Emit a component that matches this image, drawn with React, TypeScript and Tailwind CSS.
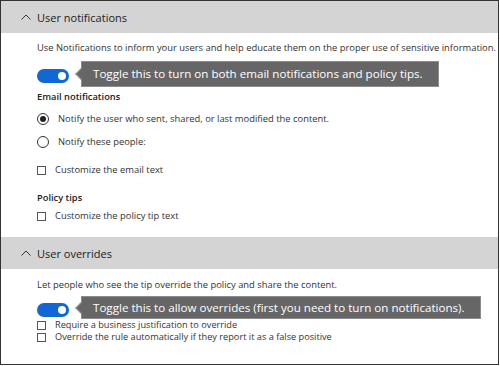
import React from "react";

const font = { fontFamily: '"Open Sans", "Noto Sans", Arial, sans-serif' };

function Chevron() {
  return (
    <svg width="10" height="6" viewBox="0 0 10 6" className="shrink-0">
      <polyline points="0.5,5.5 5,1 9.5,5.5" fill="none" stroke="#333" strokeWidth="1" />
    </svg>
  );
}

function Header({ title }: { title: string }) {
  return (
    <div className="h-[32px] bg-[#d4d4d4] flex items-center pl-[20px] gap-[6px] shrink-0">
      <Chevron />
      <span className="text-[11px] text-[#222] leading-none">{title}</span>
    </div>
  );
}

function Toggle() {
  return (
    <div className="w-[32px] h-[14px] rounded-full bg-[#1168d4] flex items-center justify-end pr-[3px] mt-[4px] shrink-0">
      <div className="w-[8px] h-[8px] rounded-full bg-white" />
    </div>
  );
}

function Callout({ text }: { text: string }) {
  return (
    <div className="relative ml-[12px] h-full bg-[#666] border border-[#8c8c8c] flex items-center pl-[11px] pr-[15px]">
      <div className="absolute left-[-5px] top-1/2 -translate-y-1/2 w-[8px] h-[8px] rotate-45 bg-[#666] border-l border-b border-[#8c8c8c]" />
      <div className="relative text-white text-[11.6px] leading-[14px] whitespace-nowrap">{text}</div>
    </div>
  );
}

function Radio({ checked }: { checked?: boolean }) {
  return (
    <div className="w-[12px] h-[12px] rounded-full border border-[#333] flex items-center justify-center shrink-0">
      {checked && <div className="w-[6px] h-[6px] rounded-full bg-[#222]" />}
    </div>
  );
}

function Checkbox() {
  return <div className="w-[9px] h-[9px] border border-[#555] bg-white shrink-0" />;
}

export default function App() {
  return (
    <div className="w-[499px] h-[365px] border border-[#333] bg-white flex flex-col overflow-hidden text-[#333]" style={font}>
      <Header title="User notifications" />
      <div className="pl-[36px] flex flex-col">
        <div className="h-[14px] mt-[8px] flex items-center text-[9.4px] whitespace-nowrap">
          Use Notifications to inform your users and help educate them on the proper use of sensitive information.
        </div>
        <div className="h-[26px] mt-[6px] flex items-center">
          <Toggle />
          <Callout text="Toggle this to turn on both email notifications and policy tips." />
        </div>
        <div className="h-[14px] mt-[3px] flex items-center text-[9.3px] font-semibold text-[#222]">Email notifications</div>
        <div className="h-[20px] mt-[5px] flex items-center gap-[9px] text-[9.4px]">
          <Radio checked />
          <span>Notify the user who sent, shared, or last modified the content.</span>
        </div>
        <div className="h-[20px] mt-[3px] flex items-center gap-[9px] text-[9.4px]">
          <Radio />
          <span>Notify these people:</span>
        </div>
        <div className="h-[18px] mt-[9px] flex items-center gap-[9px] text-[9.4px]">
          <Checkbox />
          <span>Customize the email text</span>
        </div>
        <div className="h-[14px] mt-[12px] flex items-center text-[9.3px] font-semibold text-[#222]">Policy tips</div>
        <div className="h-[16px] mt-[3px] flex items-center gap-[9px] text-[9.4px]">
          <Checkbox />
          <span>Customize the policy tip text</span>
        </div>
      </div>
      <div className="mt-[13px]">
        <Header title="User overrides" />
      </div>
      <div className="pl-[36px] flex flex-col">
        <div className="h-[14px] mt-[9px] flex items-center text-[9.4px] whitespace-nowrap">
          Let people who see the tip override the policy and share the content.
        </div>
        <div className="h-[23px] mt-[4px] flex items-center">
          <Toggle />
          <Callout text="Toggle this to allow overrides (first you need to turn on notifications)." />
        </div>
        <div className="h-[12px] flex items-center gap-[9px] text-[9.2px]">
          <Checkbox />
          <span>Require a business justification to override</span>
        </div>
        <div className="h-[12px] flex items-center gap-[9px] text-[9.2px]">
          <Checkbox />
          <span>Override the rule automatically if they report it as a false positive</span>
        </div>
      </div>
    </div>
  );
}
